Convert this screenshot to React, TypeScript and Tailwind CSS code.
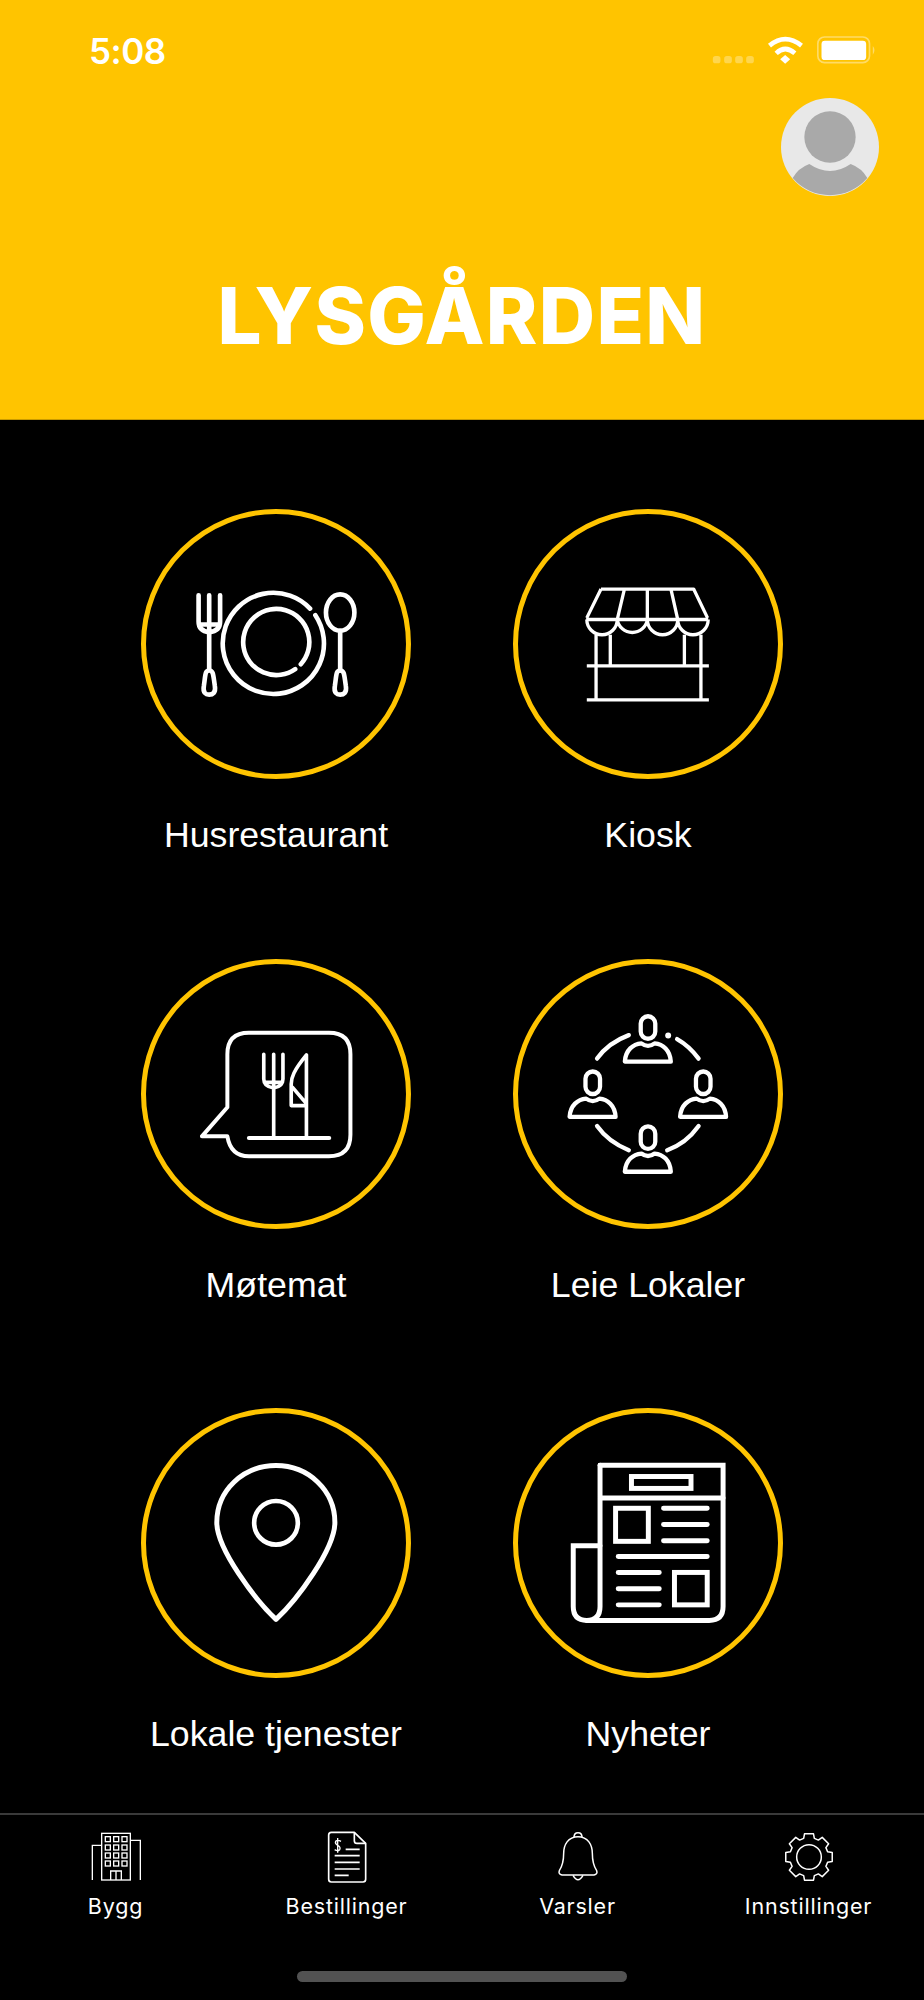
import React from "react";

const W = { fill: "none", stroke: "#fff", strokeLinecap: "round", strokeLinejoin: "round" } as const;

function Person({ dx, dy }: { dx: number; dy: number }) {
  return (
    <g transform={`translate(${dx} ${dy})`}>
      <rect x="408" y="195" width="44" height="68" rx="22" />
      <path d="M360 332 C362 297 385 279 410 277 Q430 292 450 277 C475 279 497 297 499 332 Z" />
    </g>
  );
}

const icons: Record<string, React.ReactNode> = {
  plate: (
    <svg viewBox="44 39 786 786" className="w-[260px] h-[260px]" {...W} strokeWidth="14">
      <path d="M203 285 V365 Q203 393 235 397 Q268 393 268 365 V285 M235 285 V510 M205 373 H266" />
      <path d="M235 512 C222 512 224 525 219 558 C215 580 225 585 235 585 C245 585 256 580 252 558 C247 525 248 512 235 512 Z" />
      <path d="M556 345 A153 153 0 1 1 540 325" />
      <path d="M495 508 A100 100 0 1 1 512 493" />
      <ellipse cx="631" cy="337" rx="43" ry="55" />
      <path d="M631 392 V512" />
      <path d="M631 512 C618 512 620 525 615 558 C611 580 621 585 631 585 C641 585 652 580 648 558 C643 525 644 512 631 512 Z" />
    </svg>
  ),
  kiosk: (
    <svg viewBox="37 38 786 786" className="w-[260px] h-[260px]" {...W} strokeWidth="10" strokeLinecap="butt">
      <path d="M288 265 H568 L610 352 M288 265 L245 352 M358 268 L337 357 M428 265 V357 M500 268 L520 357 M243 357 H612" />
      <path d="M245 357 A46 46 0 0 0 337 357 A46 46 0 0 0 428 357 A46 46 0 0 0 520 357 A46 46 0 0 0 612 357" />
      <path d="M273 403 V600 M316 403 V497 M540 403 V497 M590 403 V600 M245 497 H614 M245 600 H614" />
    </svg>
  ),
  meal: (
    <svg viewBox="44 37 786 786" className="w-[260px] h-[260px]" {...W} strokeWidth="12">
      <path d="M290 470 V310 Q290 245 355 245 H597 Q662 245 662 310 V553 Q662 618 597 618 H355 Q300 618 290 558 H213 Z" />
      <path d="M355 563 H598" />
      <path d="M400 310 V385 Q400 408 430 412 Q458 408 458 385 V310 M430 310 V560 M402 395 H456" strokeWidth="11" />
      <path d="M529 312 V560 M529 312 C490 360 483 380 483 400 V465 H529 M487 410 L527 457" strokeWidth="11" />
    </svg>
  ),
  people: (
    <svg viewBox="37 37 786 786" className="w-[260px] h-[260px]" {...W} strokeWidth="13">
      <Person dx={0} dy={0} />
      <Person dx={-167} dy={167} />
      <Person dx={167} dy={167} />
      <Person dx={0} dy={333} />
      <path d="M276 323 Q310 275 372 252 M518 264 Q555 285 583 323 M276 527 Q310 575 372 600 M488 600 Q545 580 583 527" />
      <circle cx="491" cy="253" r="9" fill="#fff" stroke="none" />
    </svg>
  ),
  pin: (
    <svg viewBox="44 34 786 786" className="w-[260px] h-[260px]" {...W} strokeWidth="15">
      <path d="M437 193 C535 193 615 268 615 365 C615 445 500 600 437 658 C375 600 258 445 258 365 C258 268 338 193 437 193 Z" />
      <circle cx="437" cy="366" r="66" strokeWidth="14" />
    </svg>
  ),
  news: (
    <svg viewBox="37 35 786 786" className="w-[260px] h-[260px]" {...W} strokeWidth="15" strokeLinejoin="miter">
      <path d="M285 193 H657 V620 Q657 662 615 662 H245 Q204 662 204 620 V436 H285" />
      <path d="M285 193 V620 Q285 662 245 662 M285 292 H657" />
      <rect x="380" y="227" width="180" height="36" />
      <rect x="332" y="323" width="99" height="100" />
      <rect x="510" y="517" width="99" height="98" />
      <path d="M477 323 H609 M477 372 H609 M477 421 H609 M340 469 H609 M340 517 H464 M340 566 H464 M340 615 H464" />
    </svg>
  ),
};

const items = [
  ["Husrestaurant", "plate"],
  ["Kiosk", "kiosk"],
  ["Møtemat", "meal"],
  ["Leie Lokaler", "people"],
  ["Lokale tjenester", "pin"],
  ["Nyheter", "news"],
];

function gearPath() {
  const cx = 1040, cy = 171, pts: string[] = [];
  for (let i = 0; i < 8; i++) {
    const a = (i * 45 - 90) * (Math.PI / 180);
    const p = (r: number, d: number) => {
      const t = a + d * (Math.PI / 180);
      return `${(cx + r * Math.cos(t)).toFixed(1)} ${(cy + r * Math.sin(t)).toFixed(1)}`;
    };
    pts.push(p(58, -16), p(71, -11), p(71, 11), p(58, 16));
  }
  return "M" + pts.join(" L") + " Z";
}

const tabs: [string, React.ReactNode][] = [
  [
    "Bygg",
    <svg viewBox="258 90 180 162" className="w-[60px] h-[54px]" fill="none" stroke="#fff" strokeWidth="4">
      <rect x="305" y="100" width="86" height="140" />
      {[110, 135, 159, 183].flatMap((y) =>
        [316, 341, 366].map((x) => <rect key={`${x}-${y}`} x={x} y={y} width="15" height="15" />)
      )}
      <path d="M332 240 V213 H364 V240 M348 213 V240 M305 136 H277 V240 M391 121 H421 V240" />
    </svg>,
  ],
  [
    "Bestillinger",
    <svg viewBox="950 90 180 162" className="w-[60px] h-[54px]" fill="none" stroke="#fff" strokeWidth="5" strokeLinejoin="round">
      <path d="M1062 97 H993 Q985 97 985 105 V238 Q985 246 993 246 H1088 Q1096 246 1096 238 V130 Z" />
      <path d="M1062 97 V122 Q1062 130 1070 130 H1096" />
      <path d="M1036 148 H1078 M1003 167 H1078 M1003 187 H1078 M1003 207 H1078 M1003 226 H1045" />
      <path d="M1022 124 Q1012 118 1006 124 Q1003 131 1012 136 Q1022 141 1018 149 Q1012 155 1003 149 M1012 114 V158" strokeWidth="4" />
    </svg>,
  ],
  [
    "Varsler",
    <svg viewBox="258 90 180 162" className="w-[60px] h-[54px]" fill="none" stroke="#fff" strokeWidth="4.5" strokeLinejoin="round">
      <path d="M348 110 C318 110 305 135 305 160 C305 185 300 200 292 212 Q288 222 300 225 H396 Q408 222 404 212 C396 200 391 185 391 160 C391 135 378 110 348 110 Z" />
      <path d="M336 112 Q336 98 348 98 Q360 98 360 112" />
      <path d="M333 226 Q348 252 363 226" />
    </svg>,
  ],
  [
    "Innstillinger",
    <svg viewBox="950 90 180 162" className="w-[60px] h-[54px]" fill="none" stroke="#fff" strokeWidth="4.5" strokeLinejoin="round">
      <path d={gearPath()} />
      <circle cx="1040" cy="171" r="37" />
    </svg>,
  ],
];

export default function App() {
  return (
    <div className="w-[924px] h-[2000px] bg-black flex flex-col overflow-hidden" style={{ fontFamily: '"Liberation Sans", Arial, sans-serif' }}>
      <header className="h-[420px] shrink-0 bg-[#ffc400] border-b border-[#c99b00] flex flex-col">
        <div className="mt-[34px] h-[32px] flex items-center justify-between pl-[89px] pr-[47px]">
          <span className="text-white text-[35px] font-semibold leading-none tracking-[-0.5px] mt-[2px]" style={{ fontFamily: 'Inter, sans-serif' }}>5:08</span>
          <svg viewBox="90 42 500 96" className="w-[167px] h-[32px]">
            <g fill="#fff" fillOpacity="0.3">
              <rect x="98" y="108" width="23" height="22" rx="8" />
              <rect x="132" y="108" width="23" height="22" rx="8" />
              <rect x="165" y="108" width="23" height="22" rx="8" />
              <rect x="198" y="108" width="23" height="22" rx="8" />
            </g>
            <g fill="none" stroke="#fff" strokeWidth="14">
              <path d="M268 77 Q315 38 364 77" />
              <path d="M288 100 Q315 74 344 100" />
            </g>
            <path d="M300 118 L315 105 L330 118 L315 131 Z" fill="#fff" />
            <rect x="413" y="51" width="155" height="77" rx="20" fill="none" stroke="#fff" strokeOpacity="0.4" strokeWidth="5" />
            <rect x="424" y="62" width="134" height="58" rx="10" fill="#fff" />
            <path d="M578 78 Q588 90 578 104 Z" fill="#fff" fillOpacity="0.4" />
          </svg>
        </div>
        <div className="mt-[32px] flex justify-end pr-[45px]">
          <svg viewBox="303 235 294 294" className="w-[98px] h-[98px]">
            <circle cx="450" cy="382" r="147" fill="#e8e8e8" />
            <circle cx="450" cy="352" r="77" fill="#a9a9a9" />
            <path d="M388 433 Q450 475 512 433 Q545 445 562 475 A147 147 0 0 1 338 475 Q355 445 388 433 Z" fill="#a9a9a9" />
          </svg>
        </div>
        <h1 className="mt-[75px] text-center text-white text-[78px] leading-[90px] font-extrabold tracking-[1.3px]" style={{ fontFamily: 'Inter, sans-serif' }}>
          LYSGÅRDEN
        </h1>
      </header>
      <main className="flex-1 min-h-0 pt-[89px] grid grid-cols-[372px_372px] auto-rows-[449.5px] justify-center">
        {items.map(([label, icon]) => (
          <div key={label} className="flex flex-col items-center">
            <div className="w-[270px] h-[270px] rounded-full border-[5px] border-[#ffc400] flex items-center justify-center">
              {icons[icon]}
            </div>
            <div className="mt-[36px] text-white text-[35.7px] leading-[40px]">{label}</div>
          </div>
        ))}
      </main>
      <footer className="h-[187px] shrink-0 border-t-2 border-[#3a3a3a] flex flex-col">
        <div className="grid grid-cols-4 pt-[15px]">
          {tabs.map(([label, icon]) => (
            <div key={label} className="flex flex-col items-center">
              {icon}
              <span className="mt-[9px] text-white text-[21.5px] leading-[26px] tracking-[0.8px]" style={{ fontFamily: 'Inter, sans-serif' }}>{label}</span>
            </div>
          ))}
        </div>
        <div className="mt-auto mb-[18px] mx-auto w-[330px] h-[11px] rounded-full bg-[#525252]" />
      </footer>
    </div>
  );
}
